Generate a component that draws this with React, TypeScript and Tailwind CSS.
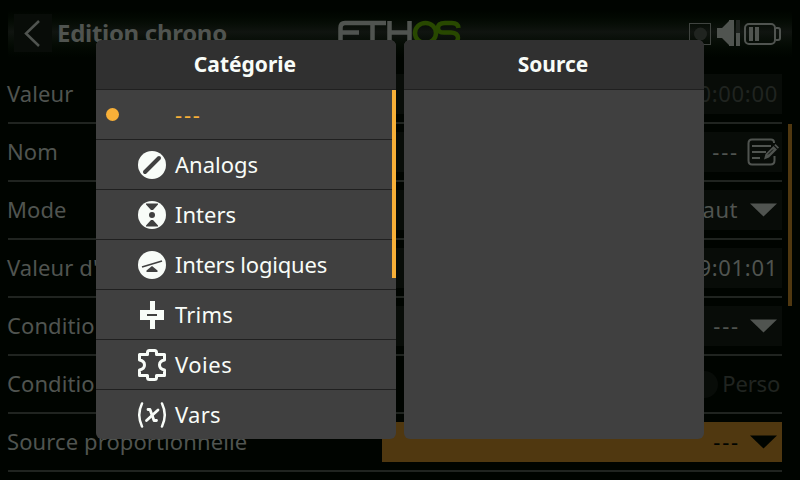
import React from "react";

type Field = "plain" | "edit" | "select" | "custom" | "active";

const rows: { label: string; value: string; kind: Field; dim?: boolean }[] = [
  { label: "Valeur", value: "00:00:00", kind: "plain", dim: true },
  { label: "Nom", value: "---", kind: "edit" },
  { label: "Mode", value: "Haut", kind: "select" },
  { label: "Valeur d'alarme", value: "09:01:01", kind: "plain" },
  { label: "Condition", value: "---", kind: "select" },
  { label: "Condition", value: "Perso", kind: "custom", dim: true },
  { label: "Source proportionnelle", value: "---", kind: "active" },
];

function Triangle({ active }: { active: boolean }) {
  return (
    <svg width="27" height="14" viewBox="0 0 27 14" className="mr-[5px]">
      <path d="M0 .500H27L13.500 13.500Z" fill={active ? "#000400" : "#505450"} />
    </svg>
  );
}

function EditIcon() {
  return (
    <svg width="32" height="28" viewBox="0 0 32 28" className="mr-[3px]" fill="none" stroke="#505450" strokeWidth="2">
      <path d="M27 5V4.500Q27 1.500 24 1.500H5Q1.500 1.500 1.500 5.500V22.500Q1.500 26.500 5 26.500H23.500Q27.500 26.500 27.500 22.500V18" />
      <path d="M5 8H24M5 14H19M5 20H13" />
      <path d="M17 21.500L18.500 16L26.500 8L30 11.500L22 19.500Z" fill="#505450" stroke="none" />
      <path d="M27.300 7.200L28.500 6L32 9.500L30.800 10.700Z" fill="#505450" stroke="none" />
      <path d="M21 16.500L26 11.500" stroke="#080c08" strokeWidth="1" />
    </svg>
  );
}

function FormRow({ label, value, kind, dim }: (typeof rows)[number]) {
  const bg = kind === "active" ? "bg-[#503810]" : kind === "custom" ? "" : "bg-[#080c08]";
  const color = kind === "active" ? "text-[#000400]" : dim ? "text-[#202420]" : "text-[#505450]";
  const spacing =
    kind === "plain" ? "mr-1 tracking-[0.7px]" :
    kind === "custom" ? "mr-[2px] tracking-[-0.2px]" :
    value !== "---" ? "mr-3 tracking-[0.5px]" :
    kind === "edit" ? "mr-[8px] tracking-[1.8px]" : "mr-[10px] tracking-[1.8px]";
  return (
    <div className="flex h-[58px] items-center justify-between border-b-2 border-[#202420]">
      <span className="-ml-px whitespace-nowrap pb-[2px] text-[22px] leading-[38px] tracking-[0.1px] text-[#505450]">{label}</span>
      <div className={`flex h-10 w-[400px] items-center justify-end ${bg} ${color}`}>
        {kind === "custom" && <span className="mr-1 h-[27px] w-14 rounded-full bg-[#080c08]" />}
        <span className={`pb-[2px] text-[22px] leading-[38px] ${spacing}`}>{value}</span>
        {kind === "edit" && <EditIcon />}
        {(kind === "select" || kind === "active") && <Triangle active={kind === "active"} />}
      </div>
    </div>
  );
}

function Logo() {
  return (
    <svg width="124" height="28" viewBox="0 0 124 28" fill="none" strokeWidth="4">
      <path d="M2.500 28V8Q2.500 3 7 3H48M2 12.500H21M34.500 3V28M51.500 1V28M51 12.500H72M71.500 1V28" stroke="#505450" strokeWidth="4.500" />
      <ellipse cx="87.500" cy="13" rx="10.500" ry="10" stroke="#284800" strokeWidth="4.500" />
      <path d="M120.500 8Q120 3 114 3H107Q100 3 100 8T107 12.500H113Q120 13 120 18T113 23H98" stroke="#284800" strokeWidth="4.500" />
    </svg>
  );
}

function StatusIcons() {
  return (
    <svg width="93" height="28" viewBox="0 0 93 28" fill="none">
      <rect x=".5" y="3.500" width="21" height="21" stroke="#404440" />
      <circle cx="11.500" cy="14" r="6.500" fill="#202420" />
      <path d="M28 8H33L40 1V0H45V26H40V25L33 18H28Z" fill="#505450" />
      <path d="M47 0H51V13H47Z" fill="#202420" />
      <path d="M47 13H51V26H47Z" fill="#505450" />
      <rect x="56" y="4" width="30" height="20" rx="4" stroke="#505450" strokeWidth="2" />
      <path d="M87 8H89Q91 8 91 10V18Q91 20 89 20H87" stroke="#505450" strokeWidth="2" />
      <path d="M60 7H64V21H60ZM66 7H70V21H66Z" fill="#505450" />
    </svg>
  );
}

const white = "#f8fcf8";
const grey = "#404040";

function Disc({ children }: { children: React.ReactNode }) {
  return (
    <svg width="28" height="28" viewBox="0 0 28 28">
      <circle cx="14" cy="14" r="14" fill={white} />
      {children}
    </svg>
  );
}

const categories: { name: string; spacing: string; icon: React.ReactNode }[] = [
  {
    name: "Analogs",
    spacing: "tracking-normal",
    icon: <Disc><path d="M7 21L21 7" stroke={grey} strokeWidth="4" strokeLinecap="round" /></Disc>,
  },
  {
    name: "Inters",
    spacing: "tracking-normal",
    icon: (
      <Disc>
        <path d="M8 2.500H20V3.500L15 9H13L8 3.500ZM8 25.500H20V24.500L15 19H13L8 24.500Z" fill={grey} />
        <circle cx="14" cy="14" r="3" fill={grey} />
      </Disc>
    ),
  },
  {
    name: "Inters logiques",
    spacing: "tracking-[-0.2px]",
    icon: (
      <Disc>
        <path d="M4 16L24 10" stroke={grey} strokeWidth="1.600" />
        <path d="M14 15L19.500 19.500V21H8.500V19.500Z" fill={grey} />
      </Disc>
    ),
  },
  {
    name: "Trims",
    spacing: "tracking-[0.2px]",
    icon: (
      <svg width="28" height="28" viewBox="0 0 28 28">
        <path d="M12 0H17V9H26V19H17V28H12V19H2V9H12Z" fill={white} />
        <path d="M9 13H19V15H9Z" fill={grey} />
      </svg>
    ),
  },
  {
    name: "Voies",
    spacing: "tracking-[0.5px]",
    icon: (
      <svg width="28" height="32" viewBox="0 0 28 32" fill="none" stroke={white} strokeWidth="3" strokeLinejoin="round">
        <path d="M1.500 5.500H9.500V3.500Q9.500 1.500 11.500 1.500H16.500Q18.500 1.500 18.500 3.500V5.500H26.500V11Q21.500 12 21.500 16T26.500 21V26.500H18.500V28.500Q18.500 30.500 16.500 30.500H11.500Q9.500 30.500 9.500 28.500V26.500H1.500V21Q6.500 20 6.500 16T1.500 11Z" />
      </svg>
    ),
  },
  {
    name: "Vars",
    spacing: "tracking-[0.3px]",
    icon: (
      <svg width="28" height="26" viewBox="0 0 28 26" fill="none" stroke={white} strokeWidth="2.500" strokeLinecap="round">
        <path d="M4 1.500Q-1.500 13 4 24.500M24 1.500Q29.500 13 24 24.500" />
        <path d="M10 7.500H12L16 18.500H18.500" strokeWidth="2.800" strokeLinejoin="round" />
        <path d="M20 8L8.500 18.500" strokeWidth="2.800" />
      </svg>
    ),
  },
];

export default function App() {
  return (
    <main className="relative h-[480px] w-[800px] overflow-hidden bg-[#000400] font-['Noto_Sans',sans-serif]">
      <header className="mx-2 mb-2 flex h-[58px] items-start justify-between bg-linear-to-b from-[#000400] from-18% via-[#101410] via-55% to-[#000400] pt-[14px]">
        <div className="flex w-[330px] items-center">
          <span className="ml-[6px] flex h-[38px] w-[38px] items-center justify-center bg-[#080c08] pr-[3px]">
            <svg width="16" height="27" viewBox="0 0 16 27" fill="none" stroke="#505450" strokeWidth="2.500">
              <path d="M15 1L2 13.500L15 26" />
            </svg>
          </span>
          <h1 className="ml-[5px] whitespace-nowrap text-2xl font-bold leading-[38px] tracking-[-0.3px] text-[#505450]">Edition chrono</h1>
        </div>
        <span className="flex-1 pt-[6px]"><Logo /></span>
        <span className="mr-[10px] pt-[6px]"><StatusIcons /></span>
      </header>

      <div className="flex">
        <section className="ml-2 w-[774px]">
          {rows.map((row, i) => <FormRow key={i} {...row} />)}
        </section>
        <span className="ml-[6px] mt-[58px] h-[182px] w-1 bg-[#503810]" />
      </div>

      <div className="absolute left-24 top-10 flex h-[399px] gap-2 text-[#f8fcf8]">
        <section className="flex w-[300px] flex-col overflow-hidden rounded-md bg-[#404040]">
          <h2 className="h-[50px] shrink-0 border-b border-[#202020] bg-[#303030] pr-0.5 text-center text-[21px] font-bold leading-[48px]">Catégorie</h2>
          <div className="relative">
            <ul>
              <li className="flex h-[50px] items-center border-b border-[#202020] pl-[10px] text-[#f8b038]">
                <span className="h-[13px] w-[13px] rounded-full bg-[#f8b038]" />
                <span className="ml-14 text-[22px] leading-[49px] tracking-[1.8px]">---</span>
              </li>
              {categories.map(({ name, spacing, icon }) => (
                <li key={name} className="flex h-[50px] items-center border-b border-[#202020] pl-[42px] last:border-b-0 last:pb-px">
                  {icon}
                  <span className={`ml-[9px] pb-px text-[22px] leading-[48px] ${spacing}`}>{name}</span>
                </li>
              ))}
            </ul>
            <span className="absolute right-0 top-0 h-[188px] w-1 bg-[#f8b038]" />
          </div>
        </section>
        <section className="w-[300px] overflow-hidden rounded-md bg-[#404040]">
          <h2 className="h-[50px] border-b border-[#202020] bg-[#303030] pr-0.5 text-center text-[21px] font-bold leading-[48px]">Source</h2>
        </section>
      </div>
    </main>
  );
}
